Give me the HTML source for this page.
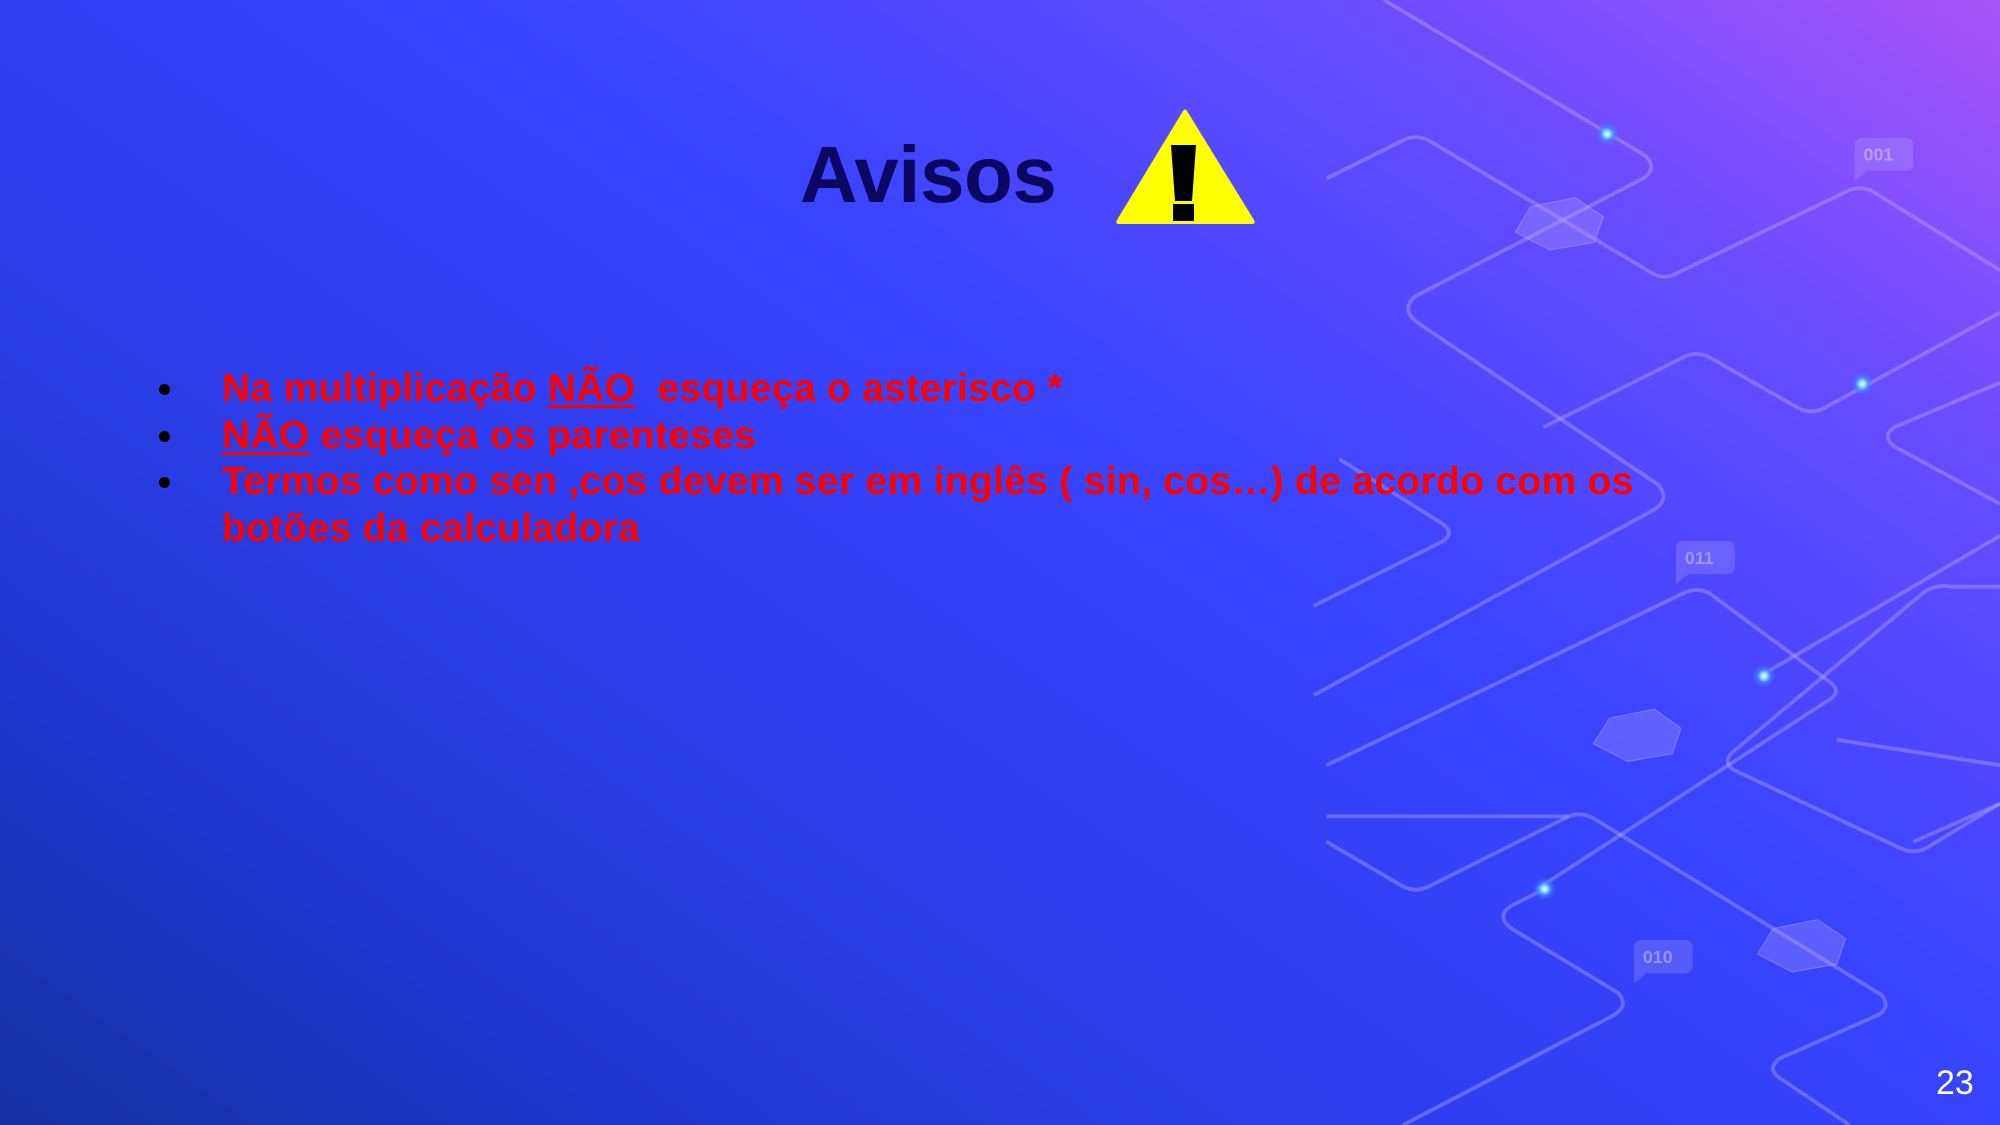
<!DOCTYPE html>
<html><head><meta charset="utf-8"><style>
html,body{margin:0;padding:0}
body{width:2000px;height:1125px;overflow:hidden;position:relative;font-family:"Liberation Sans",sans-serif;
background:linear-gradient(215deg,#a855f7 0%,#6a4cff 18%,#3a44ff 40%,#2f3ef0 60%,#1f35c8 85%,#1530a0 100%);}
svg.bg{position:absolute;left:0;top:0;width:2000px;height:1125px}
.t{position:absolute;left:800px;top:130px;font-size:80px;font-weight:bold;color:#0a0760;letter-spacing:-0.5px;line-height:90px}
ul{position:absolute;left:0;top:366px;margin:0;padding:0;list-style:none}
li{position:relative;padding-left:222px;font-size:39px;font-weight:bold;color:#ff0000;line-height:46.5px;width:1420px;letter-spacing:0.3px}
li:before{content:"";position:absolute;left:159px;top:18px;width:11px;height:11px;border-radius:50%;background:#000}
u{text-decoration-thickness:3px;text-underline-offset:4px}
.n{position:absolute;left:1936px;top:1064px;font-size:34px;color:#fff}
</style></head><body>
<svg class="bg" viewBox="0 0 1568 882" preserveAspectRatio="none">
<defs><radialGradient id="g"><stop offset="0" stop-color="#fff"/><stop offset="0.3" stop-color="#7fd4ff"/><stop offset="0.6" stop-color="#3f8cff" stop-opacity="0.6"/><stop offset="1" stop-color="#3f8cff" stop-opacity="0"/></radialGradient></defs>
<g fill="none" stroke="#c9b8ff" stroke-opacity="0.35" stroke-width="3" stroke-linejoin="round">
<path d="M1085 0 L1290 122 Q1300 132 1288 140 L1110 232 Q1098 242 1110 252 L1300 380 Q1310 392 1296 400 L1030 545"/>
<path d="M1040 140 L1100 110 Q1110 105 1120 110 L1295 214 Q1305 220 1315 214 L1448 150 Q1458 145 1468 150 L1568 212"/>
<path d="M1210 335 L1320 280 Q1330 275 1340 280 L1410 320 Q1420 325 1430 320 L1568 245"/>
<path d="M1568 300 L1485 335 Q1475 342 1485 350 L1568 395"/>
<path d="M1030 475 L1130 425 Q1142 418 1130 410 L1050 360"/>
<path d="M1040 600 L1320 465 Q1330 460 1340 465 L1435 535 Q1445 543 1432 550 L1205 697"/>
<path d="M1568 460 L1530 460 Q1520 458 1510 463 L1358 590 Q1350 598 1360 604 L1490 665 Q1500 670 1510 665 L1568 630"/>
<path d="M1380 530 L1568 420"/>
<path d="M1040 640 L1230 640 Q1240 636 1250 642 L1475 780 Q1483 790 1472 796 L1395 830 Q1385 838 1395 845 L1450 882"/>
<path d="M1500 660 L1568 630"/>
<path d="M1568 600 L1440 580"/>
<path d="M1211 697 L1185 710 Q1172 718 1185 728 L1268 778 Q1278 788 1265 796 L1100 882"/>
<path d="M1040 660 L1100 695 Q1110 700 1120 695 L1230 640"/>
</g>
<g fill="#b9a9ff" fill-opacity="0.28" stroke="#d0c4ff" stroke-opacity="0.3">
<polygon points="1200,162 1235,155 1257,170 1250,190 1215,196 1188,182"/>
<polygon points="1262,563 1297,556 1318,571 1311,591 1276,597 1249,583"/>
<polygon points="1390,728 1425,721 1447,736 1440,756 1405,762 1378,748"/>
</g>
<g fill="#c8bbff" fill-opacity="0.22">
<path d="M1456 108 h38 q6 0 6 6 v14 q0 6 -6 6 h-30 l-10 8 v-28 q0 -6 6 -6z"/>
<path d="M1316 424 h38 q6 0 6 6 v14 q0 6 -6 6 h-30 l-10 8 v-28 q0 -6 6 -6z"/>
<path d="M1283 737 h38 q6 0 6 6 v14 q0 6 -6 6 h-30 l-10 8 v-28 q0 -6 6 -6z"/>
</g>
<g fill="#ffffff" fill-opacity="0.35" font-family="Liberation Sans" font-weight="bold" font-size="14">
<text x="1461" y="126">001</text><text x="1321" y="442">011</text><text x="1288" y="755">010</text>
</g>
<circle cx="1260" cy="105" r="9" fill="url(#g)"/><circle cx="1460" cy="301" r="9" fill="url(#g)"/>
<circle cx="1383" cy="530" r="9" fill="url(#g)"/><circle cx="1211" cy="697" r="9" fill="url(#g)"/>
</svg>
<div class="t">Avisos</div>
<svg style="position:absolute;left:1114px;top:108px" width="143" height="118" viewBox="0 0 143 118">
<path d="M69 3 Q71 0 73 3 L140 112 Q142 116 138 116 L5 116 Q1 116 3 112 Z" fill="#ffff00"/>
<path d="M57 37 h25 l-4 56 h-17 Z" fill="#000"/>
<rect x="59" y="96" width="21" height="17" fill="#000"/>
</svg>
<ul>
<li>Na multiplicação <u>NÃO</u>&nbsp; esqueça o asterisco *</li>
<li><u>NÃO</u> esqueça os parenteses</li>
<li>Termos como sen ,cos devem ser em inglês ( sin, cos…) de acordo com os<br>botões da calculadora</li>
</ul>
<div class="n">23</div>
</body></html>
